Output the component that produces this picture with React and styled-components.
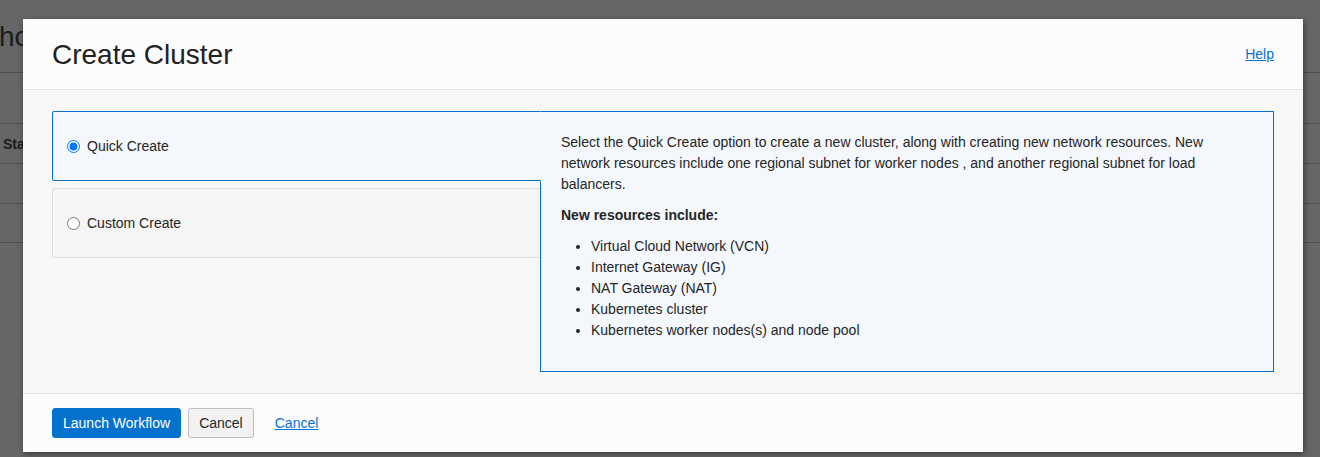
import * as React from "react";
import styled, { createGlobalStyle } from "styled-components";

const GlobalStyle = createGlobalStyle`
  html, body {
    margin: 0;
    padding: 0;
    height: 457px;
    overflow: hidden;
    background: #666666;
    font-family: "Liberation Sans", Arial, sans-serif;
  }
`;

// dimmed page behind the dialog
const Page = styled.div`
  position: relative;
  width: 1320px;
  height: 457px;
  overflow: hidden;
  color: #1c1c1c;
`;

const PageTitle = styled.h1`
  margin: 0;
  height: 73px;
  border-bottom: 1px solid #4f4f4f;
  box-sizing: border-box;
  padding: 20px 0 0 0;
  margin-left: -1px;
  font-size: 28px;
  font-weight: normal;
  line-height: 34px;
`;

const Table = styled.div`
  margin-top: 50px;
`;

const TableRow = styled.div`
  height: 40px;
  border-top: 1px solid #4f4f4f;
  box-sizing: border-box;
  display: flex;
  align-items: center;
  padding-left: 3px;
  font-size: 14px;
  font-weight: ${(p) => (p.head ? "bold" : "normal")};
  &:last-child {
    border-bottom: 1px solid #4f4f4f;
  }
`;

const Dialog = styled.div`
  position: absolute;
  left: 23px;
  top: 19px;
  width: 1280px;
  height: 433px;
  display: flex;
  flex-direction: column;
  background: #fcfcfc;
  box-shadow: 1px 2px 6px rgba(0, 0, 0, 0.45);
  color: #252525;
`;

const Header = styled.div`
  height: 71px;
  box-sizing: border-box;
  display: flex;
  align-items: center;
  justify-content: space-between;
  padding: 0 29px;
  border-bottom: 1px solid #e3e3e3;
`;

const Title = styled.h2`
  margin: 0;
  font-size: 28px;
  font-weight: normal;
  color: #222222;
  padding-top: 1px;
`;

const Link = styled.a`
  font-size: 14px;
  color: #0572ce;
  text-decoration: underline;
  cursor: pointer;
`;

const Body = styled.div`
  flex: 1;
  background: #f7f7f7;
  padding: 21px 29px;
  display: grid;
  grid-template-columns: 489px 1fr;
  align-items: start;
`;

const Options = styled.div`
  display: flex;
  flex-direction: column;
  gap: 7px;
`;

// the selected option sits over the panel's left edge so the two join
const Option = styled.label`
  position: ${(p) => (p.selected ? "relative" : "static")};
  z-index: ${(p) => (p.selected ? 1 : "auto")};
  width: ${(p) => (p.selected ? "489px" : "488px")};
  height: 70px;
  box-sizing: border-box;
  display: flex;
  align-items: center;
  gap: 7px;
  padding-left: 14px;
  border: 1px solid ${(p) => (p.selected ? "#0572ce" : "#dddddd")};
  border-right: ${(p) => (p.selected ? "1px solid transparent" : "none")};
  border-radius: 2px 0 0 2px;
  background: ${(p) => (p.selected ? "#f4f8fc" : "#f5f5f5")};
  font-size: 14px;
  color: #252525;
  cursor: pointer;
`;

const Radio = styled.input`
  margin: 0;
  width: 13px;
  height: 13px;
`;

const Panel = styled.div`
  margin-left: -1px;
  height: 261px;
  box-sizing: border-box;
  border: 1px solid #0572ce;
  background: #f4f8fc;
  padding: 20px 20px 0 20px;
  font-size: 14px;
  line-height: 21px;
  color: #252525;
`;

const Paragraph = styled.p`
  margin: 0 0 10px 0;
  font-weight: ${(p) => (p.bold ? "bold" : "normal")};
`;

const List = styled.ul`
  margin: 0;
  padding-left: 30px;
`;

const Footer = styled.div`
  height: 59px;
  box-sizing: border-box;
  border-top: 1px solid #e3e3e3;
  display: flex;
  align-items: center;
  gap: 7px;
  padding: 0 29px 1px 29px;
`;

const Button = styled.button`
  height: 30px;
  box-sizing: border-box;
  padding: 0 10px;
  border-radius: 3px;
  font-family: "Liberation Sans", Arial, sans-serif;
  font-size: 14px;
  cursor: pointer;
  border: 1px solid ${(p) => (p.primary ? "#0572ce" : "#bdbdbd")};
  background: ${(p) => (p.primary ? "#0572ce" : "#f2f2f2")};
  color: ${(p) => (p.primary ? "#ffffff" : "#252525")};
`;

const FooterLink = styled(Link)`
  margin-left: 14px;
`;

const resources = [
  "Virtual Cloud Network (VCN)",
  "Internet Gateway (IG)",
  "NAT Gateway (NAT)",
  "Kubernetes cluster",
  "Kubernetes worker nodes(s) and node pool",
];

export default function App() {
  const [mode, setMode] = React.useState("quick");

  return (
    <>
      <GlobalStyle />
      <Page>
        <PageTitle>hosts</PageTitle>
        <Table>
          <TableRow head>Status</TableRow>
          <TableRow />
          <TableRow />
        </Table>

        <Dialog>
          <Header>
            <Title>Create Cluster</Title>
            <Link>Help</Link>
          </Header>
          <Body>
            <Options>
              <Option selected={mode === "quick"}>
                <Radio
                  type="radio"
                  name="mode"
                  checked={mode === "quick"}
                  onChange={() => setMode("quick")}
                />
                Quick Create
              </Option>
              <Option selected={mode === "custom"}>
                <Radio
                  type="radio"
                  name="mode"
                  checked={mode === "custom"}
                  onChange={() => setMode("custom")}
                />
                Custom Create
              </Option>
            </Options>
            <Panel>
              <Paragraph>
                Select the Quick Create option to create a new cluster, along
                with creating new network resources. New network resources
                include one regional subnet for worker nodes , and another
                regional subnet for load balancers.
              </Paragraph>
              <Paragraph bold>New resources include:</Paragraph>
              <List>
                {resources.map((r) => (
                  <li key={r}>{r}</li>
                ))}
              </List>
            </Panel>
          </Body>
          <Footer>
            <Button primary>Launch Workflow</Button>
            <Button>Cancel</Button>
            <FooterLink>Cancel</FooterLink>
          </Footer>
        </Dialog>
      </Page>
    </>
  );
}
